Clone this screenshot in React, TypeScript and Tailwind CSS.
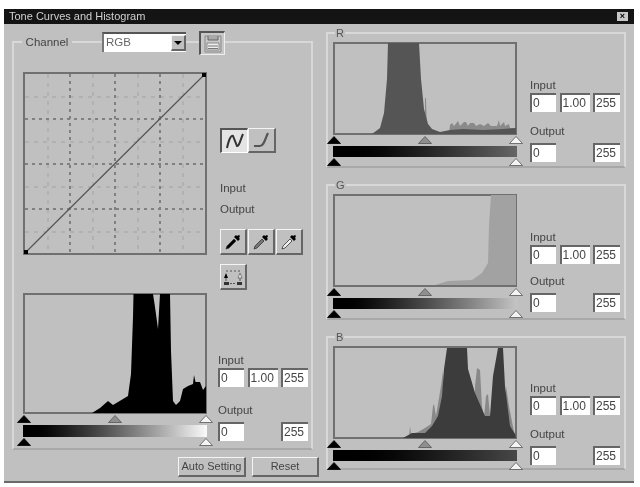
const raised =
  "border-t border-l border-t-[#f4f4f4] border-l-[#f4f4f4] border-r-2 border-b-2 border-r-[#666] border-b-[#666] bg-[#c0c0c0]";

const leftFill =
  "0,120 69,120 77,115 85,108 90,112 100,106 105,103 108,81 110,24 110.5,1 130,1 132,14 135,36 137,1 147,1 148,58 150,108 153,112 157,108 160,96 165,93 170,91 171,82 172.5,89 177,89 180,97 183,93 183,120";
const rFill =
  "39,92 47,86 51,71 54,37 55,1 86,1 88,37 91,67 95,82 99,87 107,90 117,88 130,87 150,88 170,87 183,86 183,92";
const rNoise =
  "92,92 92,56 93,56 94,92 116,92 117,83 119,81 121,84 125,79 127,84 131,80 133,80 135,84 137,81 141,81 143,84 147,82 151,84 155,81 158,84 164,84 166,78 167,84 171,80 172,84 176,82 177,86 183,86 183,92";
const gFill =
  "102,91 115,87 139,86 149,79 155,69 156,31 158,1 183,1 183,91";
const bFill =
  "70,92 79,87 92,87 99,80 105,70 109,50 111,23 114,2 134,2 135,23 142,47 152,70 157,70 160,30 165,2 170,2 172,40 177,80 182,88 183,92";
const bNoise =
  "76,92 77,80 78,88 85,86 92,82 98,78 100,60 101,58 103,70 108,40 110,25 112,92 142,92 142,40 144,22 147,24 149,60 151,72 153,50 155,48 157,70 158,92 172,92 173,40 176,60 181,86 183,92";

function Tri({ fill }: { fill: string }) {
  return (
    <svg width="14" height="8" viewBox="0 0 14 8" className="block shrink-0">
      <path d="M7 .5 13.5 7.5H.5Z" fill={fill} stroke={fill === "#000" ? "#000" : "#555"} strokeWidth="0.8" />
    </svg>
  );
}

function Hist({
  height,
  fill,
  noise,
  color,
  noiseColor,
  grad,
  gradH,
}: {
  height: number;
  fill: string;
  noise?: string;
  color: string;
  noiseColor?: string;
  grad: string;
  gradH: string;
}) {
  return (
    <div className="w-[184px] shrink-0">
      <div className="border-2 border-[#707070]" style={{ height }}>
        <svg width="184" height={height} viewBox={`0 0 184 ${height}`} className="block -mt-[2px] -ml-[2px]">
          {noise && <polygon points={noise} fill={noiseColor} />}
          <polygon points={fill} fill={color} />
        </svg>
      </div>
      <div className="flex justify-between -mx-[6px] mt-[1px]">
        <Tri fill="#000" />
        <Tri fill="#8e8e8e" />
        <Tri fill="#f4f4f4" />
      </div>
      <div className={`mt-[2px] w-[184px] ${gradH} ${grad}`} />
      <div className="flex justify-between -mx-[6px] mt-[1px]">
        <Tri fill="#000" />
        <Tri fill="#f4f4f4" />
      </div>
    </div>
  );
}

function Box({ value, w }: { value: string; w: string }) {
  return (
    <div className={`${w} h-[19px] bg-white border-t-2 border-l-2 border-t-[#666] border-l-[#666] pl-[1px] text-[12px] leading-[17px] text-[#444]`}>
      {value}
    </div>
  );
}

function Levels({ outMt, inMt }: { outMt: string; inMt: string }) {
  return (
    <div className={`w-[90px] ${inMt}`}>
      <div className="text-[11.5px] leading-[13px] text-[#444]">Input</div>
      <div className="flex justify-between mt-[1px]">
        <Box value="0" w="w-[26px]" />
        <Box value="1.00" w="w-[30px]" />
        <Box value="255" w="w-[27px]" />
      </div>
      <div className={`text-[11.5px] leading-[13px] text-[#444] ${outMt}`}>Output</div>
      <div className="flex justify-between mt-[5px]">
        <Box value="0" w="w-[26px]" />
        <Box value="255" w="w-[27px]" />
      </div>
    </div>
  );
}

function Panel({ label, h, children }: { label: string; h: string; children: React.ReactNode }) {
  return (
    <div className={`${h} w-[300px] border-2 border-[#d8d8d8] border-b-[#a8a8a8] px-[5px]`}>
      <div className="-mt-[8px] ml-[2px] h-[14px] w-fit bg-[#c0c0c0] px-[1px] text-[11px] leading-[14px] text-[#555]">{label}</div>
      <div className="flex mt-[2px]">{children}</div>
    </div>
  );
}

function Dropper({ tip }: { tip: string }) {
  return (
    <div className={`w-[27px] h-[26px] ${raised} flex items-center justify-center`}>
      <svg width="18" height="18" viewBox="0 0 18 18">
        <path d="M2 16 3 13 10 6 12 8 5 15Z" fill={tip} stroke="#333" strokeWidth="0.8" />
        <path d="M10 4 14 8 16 6 15 5 16 3 15 2 13 3 12 2Z" fill="#000" />
      </svg>
    </div>
  );
}

export default function App() {
  return (
    <div className="w-[640px] h-[487px] bg-white pl-[4px] pt-[9px] overflow-hidden font-['Liberation_Sans',Arial,sans-serif] blur-[0.7px]">
      <div className="w-[630px] h-[474px] bg-[#c0c0c0] border-b-2 border-b-[#6a6a6a]">
        <div className="h-[15px] bg-[#141414] flex items-center justify-between pl-[5px] pr-[6px]">
          <span className="text-[11px] leading-[15px] text-[#d0d0d0]">Tone Curves and Histogram</span>
          <div className="w-[11px] h-[9px] bg-[#c8c8c8] flex items-center justify-center text-[9px] leading-[9px] font-bold text-black">×</div>
        </div>

        <div className="flex">
          <div className="w-[322px] shrink-0 pl-[8px] pt-[17px]">
            <div className="w-[301px] h-[409px] border-2 border-[#d8d8d8] border-b-[#a8a8a8] border-r-[#d8d8d8] pl-[9px]">
              <div className="flex items-start -mt-[11px]">
                <div className="-ml-[1px] mt-[1px] h-[18px] w-[50px] bg-[#c0c0c0] text-[11.5px] leading-[18px] text-[#444] text-center">Channel</div>
                <div className="ml-[30px] w-[84px] h-[20px] bg-white border-t-2 border-l-2 border-t-[#555] border-l-[#777] flex items-center justify-between text-[11.5px] text-[#666] pl-[2px]">
                  RGB
                  <div className={`w-[15px] h-[16px] ${raised} flex items-center justify-center`}>
                    <div className="w-0 h-0 border-x-[4px] border-x-transparent border-t-[4px] border-t-black" />
                  </div>
                </div>
                <div className="ml-[13px] -mt-[1px] w-[26px] h-[24px] border-t-2 border-l-2 border-t-[#555] border-l-[#555] border-r border-b border-r-[#eee] border-b-[#eee] bg-[#c8c8c8] flex items-center justify-center">
                  <svg width="20" height="18" viewBox="0 0 20 18">
                    <path d="M2 1H18V17H2Z" fill="#c8c8c8" stroke="#888" />
                    <path d="M5 1V5H15V1" fill="#aaa" stroke="#666" />
                    <path d="M4 8H16V15H4Z" fill="#eee" stroke="#888" />
                    <path d="M5 11H15M5 13.5H15" stroke="#777" />
                  </svg>
                </div>
              </div>

              <div className="flex mt-[17px]">
                <div className="w-[184px] h-[183px] shrink-0 border-2 border-[#707070]">
                  <svg width="184" height="183" viewBox="0 0 184 183" className="block -mt-[2px] -ml-[2px]">
                    <g stroke="#a2a2a2" strokeWidth="1" strokeDasharray="4 5">
                      <path d="M25 2V181M70 2V181M115 2V181M160 2V181" />
                      <path d="M2 25H182M2 70H182M2 115H182M2 160H182" />
                    </g>
                    <g stroke="#808080" strokeWidth="2" strokeDasharray="3 4">
                      <path d="M47 2V181M92 2V181M137 2V181" />
                      <path d="M2 47H182M2 92H182M2 137H182" />
                    </g>
                    <path d="M2 181 182 2" stroke="#555" strokeWidth="1.2" fill="none" />
                    <rect x="179" y="1" width="4" height="4" fill="#000" />
                    <rect x="1" y="178" width="4" height="4" fill="#000" />
                  </svg>
                </div>
                <div className="ml-[13px] pt-[56px] w-[88px]">
                  <div className="flex">
                    <div className="w-[28px] h-[25px] border-t-2 border-l-2 border-t-[#555] border-l-[#555] border-r border-b border-r-white border-b-white bg-[#e4e4e4] flex items-center justify-center">
                      <svg width="20" height="18" viewBox="0 0 20 18">
                        <path d="M2 16C4 7 6 3 8 4L12 14C14 15 16 6 18 2" fill="none" stroke="#333" strokeWidth="2" />
                      </svg>
                    </div>
                    <div className={`w-[28px] h-[25px] ${raised} flex items-center justify-center`}>
                      <svg width="20" height="18" viewBox="0 0 20 18">
                        <path d="M2 15H8C12 15 13 8 16 2" fill="none" stroke="#555" strokeWidth="2.2" />
                      </svg>
                    </div>
                  </div>
                  <div className="mt-[28px] text-[11.5px] leading-[14px] text-[#444]">Input</div>
                  <div className="mt-[7px] text-[11.5px] leading-[14px] text-[#444]">Output</div>
                  <div className="flex mt-[13px] w-[83px] justify-between">
                    <Dropper tip="#000" />
                    <Dropper tip="#777" />
                    <Dropper tip="#eee" />
                  </div>
                  <div className={`mt-[9px] w-[27px] h-[26px] ${raised} flex items-center justify-center`}>
                    <svg width="20" height="20" viewBox="0 0 20 20">
                      <path d="M3 4H17" stroke="#555" strokeDasharray="2 2" />
                      <path d="M3 6 1 11H5Z" fill="#000" />
                      <path d="M17 6 15 11H19Z" fill="#eee" stroke="#444" strokeWidth="0.6" />
                      <path d="M3 11V14M17 11V14" stroke="#555" />
                      <path d="M1 15H6V18H1ZM14 15H19V18H14Z" fill="#333" />
                      <path d="M7 16.5H13" stroke="#555" strokeDasharray="2 1" />
                    </svg>
                  </div>
                </div>
              </div>

              <div className="flex mt-[3px]">
                <Hist
                  height={121}
                  fill={leftFill}
                  color="#000"
                  grad="bg-linear-to-r from-black to-[#fafafa]"
                  gradH="h-[12px]"
                />
                <div className="ml-[11px]">
                  <Levels inMt="mt-[61px]" outMt="mt-[17px]" />
                </div>
              </div>
            </div>

            <div className="flex justify-end gap-[6px] mt-[7px] pr-[7px]">
              <div className={`w-[68px] h-[20px] ${raised} whitespace-nowrap text-[11px] leading-[17px] text-center text-[#444]`}>Auto Setting</div>
              <div className={`w-[67px] h-[20px] ${raised} whitespace-nowrap text-[11px] leading-[17px] text-center text-[#444]`}>Reset</div>
            </div>
          </div>

          <div className="flex flex-col pt-[8px] gap-[16px]">
            <Panel label="R" h="h-[136px]">
              <Hist
                height={93}
                fill={rFill}
                noise={rNoise}
                color="#555"
                noiseColor="#8a8a8a"
                grad="bg-linear-to-r from-black to-[#666]"
                gradH="h-[11px]"
              />
              <div className="ml-[13px]">
                <Levels inMt="mt-[37px]" outMt="mt-[13px]" />
              </div>
            </Panel>
            <Panel label="G" h="h-[136px]">
              <Hist
                height={93}
                fill={gFill}
                color="#a2a2a2"
                grad="bg-linear-to-r from-black to-[#c4c4c4]"
                gradH="h-[11px]"
              />
              <div className="ml-[13px]">
                <Levels inMt="mt-[37px]" outMt="mt-[11px]" />
              </div>
            </Panel>
            <Panel label="B" h="h-[134px]">
              <Hist
                height={93}
                fill={bFill}
                noise={bNoise}
                color="#3c3c3c"
                noiseColor="#888"
                grad="bg-linear-to-r from-black to-[#474747]"
                gradH="h-[11px]"
              />
              <div className="ml-[13px]">
                <Levels inMt="mt-[36px]" outMt="mt-[13px]" />
              </div>
            </Panel>
          </div>
        </div>
      </div>
    </div>
  );
}
